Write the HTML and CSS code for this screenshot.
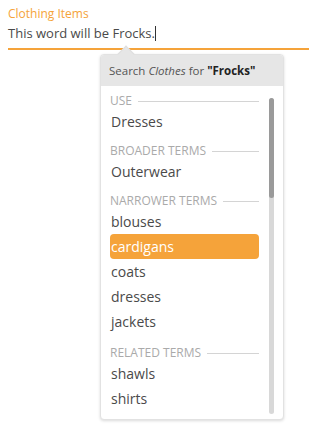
FILE: index.html
```html
<!DOCTYPE html>
<html lang="en">
<head>
    <meta charset="UTF-8">
    <meta name="viewport" content="width=device-width, initial-scale=1.0">
    <title>Thesaurus Lookup</title>
    <link rel="stylesheet" href="styles.css">
</head>
<body>
    <div class="field">
        <label class="field-label">Clothing Items</label>
        <div class="field-input">This word will be Frocks.<span class="caret"></span></div>

        <div class="popup">
            <div class="popup-arrow"></div>
            <div class="popup-header">Search <em>Clothes</em> for <strong>"Frocks"</strong></div>
            <div class="popup-body">
                <div class="term-list">
                    <div class="section">
                        <div class="section-title">Use</div>
                        <div class="term">Dresses</div>
                    </div>
                    <div class="section">
                        <div class="section-title">Broader Terms</div>
                        <div class="term">Outerwear</div>
                    </div>
                    <div class="section">
                        <div class="section-title">Narrower Terms</div>
                        <div class="term">blouses</div>
                        <div class="term active">cardigans</div>
                        <div class="term">coats</div>
                        <div class="term">dresses</div>
                        <div class="term">jackets</div>
                    </div>
                    <div class="section">
                        <div class="section-title">Related Terms</div>
                        <div class="term">shawls</div>
                        <div class="term">shirts</div>
                    </div>
                </div>
                <div class="scrollbar">
                    <div class="scrollbar-thumb"></div>
                </div>
            </div>
        </div>
    </div>
</body>
</html>
```

FILE: styles.css
```css
* {
    margin: 0;
    padding: 0;
    box-sizing: border-box;
}

html, body {
    min-height: 100vh;
}

body {
    font-family: 'Open Sans', 'Liberation Sans', sans-serif;
    background: white;
    color: #4a4a4a;
}

.field {
    position: relative;
    min-height: 436px;
    padding: 5px 0 0 8px;
}

.field-label {
    display: block;
    color: #f5a33a;
    font-size: 12px;
    line-height: 18px;
}

.field-input {
    font-size: 13px;
    line-height: 20px;
    padding-bottom: 5px;
    border-bottom: 2px solid #f5a33a;
}

.caret {
    display: inline-block;
    width: 1px;
    height: 15px;
    background: #333;
    vertical-align: -3px;
}

.popup {
    position: absolute;
    left: 100px;
    top: 54px;
    width: 184px;
    background: white;
    border: 1px solid #e2e2e2;
    border-radius: 4px;
    box-shadow: 0 1px 3px rgba(0, 0, 0, 0.15);
}

.popup-arrow {
    position: absolute;
    left: 19px;
    top: -7px;
    width: 12px;
    height: 12px;
    background: #e6e6e6;
    border-left: 1px solid #dedede;
    border-top: 1px solid #dedede;
    transform: rotate(45deg);
}

.popup-header {
    position: relative;
    background: #e6e6e6;
    border-radius: 3px 3px 0 0;
    font-size: 11.5px;
    line-height: 31px;
    padding-left: 8px;
    color: #555;
}

.popup-header strong {
    color: #222;
}

.popup-body {
    display: flex;
    padding: 7px 9px 8px 9px;
    gap: 10px;
}

.term-list {
    flex: 1;
}

.section + .section {
    margin-top: 9px;
}

.section:last-child {
    margin-top: 11px;
}

.section-title {
    display: flex;
    align-items: center;
    gap: 6px;
    font-size: 12px;
    line-height: 16px;
    color: #aaa;
    text-transform: uppercase;
}

.section-title::after {
    content: '';
    flex: 1;
    height: 1px;
    background: #d4d4d4;
}

.term {
    font-size: 14px;
    line-height: 25px;
    padding-left: 1px;
    border-radius: 4px;
}

.term.active {
    background: #f5a33a;
    color: white;
}

.scrollbar {
    width: 5px;
    margin-top: 5px;
    margin-bottom: -3px;
    background: #d8d8d8;
    border-radius: 3px;
}

.scrollbar-thumb {
    height: 100px;
    background: #9a9a9a;
    border-radius: 3px;
}
```
